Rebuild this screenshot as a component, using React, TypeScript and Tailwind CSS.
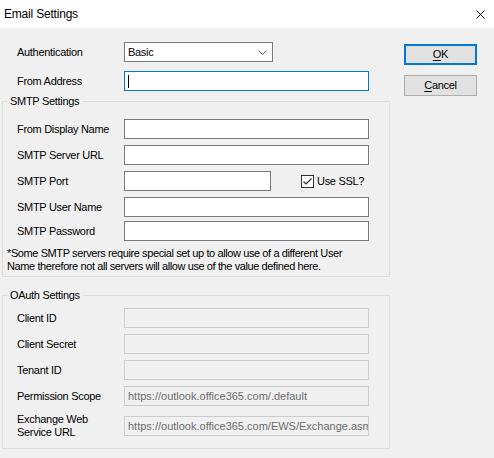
import React from "react";

const Label = ({ children, w = "w-[124px]", pl = "pl-[17px]" }: { children: React.ReactNode; w?: string; pl?: string }) => (
  <div className={`${w} ${pl} shrink-0 leading-[13px]`}>{children}</div>
);

const TextBox = ({ w = "w-[245px]", focused = false }: { w?: string; focused?: boolean }) => (
  <div className={`${w} h-[20px] bg-white border ${focused ? "border-[#0078d7]" : "border-[#7a7a7a]"} flex items-center pl-[3px]`}>
    {focused && <div className="w-px h-[13px] bg-black" />}
  </div>
);

const Disabled = ({ text = "" }: { text?: string }) => (
  <div className="w-[245px] h-[20px] bg-[#f0f0f0] border border-[#cccccc] flex items-center pl-[3px] overflow-hidden whitespace-nowrap text-[#6d6d6d] leading-[13px] tracking-normal">
    {text}
  </div>
);

export default function App() {
  return (
    <div
      className="w-[494px] h-[458px] flex flex-col bg-[#f0f0f0] text-black text-[11px] tracking-[-0.3px]"
      style={{ fontFamily: '"Liberation Sans", Arial, sans-serif' }}
    >
      {/* Title bar */}
      <div className="h-[28px] bg-white flex items-center justify-between shrink-0">
        <div className="pl-[4px] text-[12px] tracking-[-0.2px] leading-[14px]">Email Settings</div>
        <div className="pr-[9px] flex items-center">
          <svg width="9" height="9" viewBox="0 0 9 9">
            <path d="M0.5 0.5 L8.5 8.5 M8.5 0.5 L0.5 8.5" stroke="#000" strokeWidth="1" fill="none" />
          </svg>
        </div>
      </div>

      {/* Body */}
      <div className="flex flex-1">
        {/* Left column */}
        <div className="w-[404px] shrink-0 flex flex-col">
          <div className="flex items-center mt-[14px]">
            <Label>Authentication</Label>
            <div className="w-[149px] h-[20px] bg-white border border-[#7a7a7a] flex items-center justify-between pl-[3px] pr-[5px]">
              <span className="leading-[13px]">Basic</span>
              <svg width="9" height="5" viewBox="0 0 9 5">
                <path d="M0.5 0.5 L4.5 4.5 L8.5 0.5" stroke="#5a5a5a" strokeWidth="1" fill="none" />
              </svg>
            </div>
          </div>
          <div className="flex items-center mt-[9px]">
            <Label>From Address</Label>
            <TextBox focused />
          </div>

          {/* SMTP Settings */}
          <fieldset className="w-[388px] ml-[2px] mt-[4px] border border-[#dcdcdc]">
            <legend className="ml-[4px] px-[3px] leading-[13px]">SMTP Settings</legend>
            <div className="flex items-center mt-[11px]">
              <Label w="w-[121px]" pl="pl-[14px]">From Display Name</Label>
              <TextBox />
            </div>
            <div className="flex items-center mt-[6px]">
              <Label w="w-[121px]" pl="pl-[14px]">SMTP Server URL</Label>
              <TextBox />
            </div>
            <div className="flex items-center mt-[6px]">
              <Label w="w-[121px]" pl="pl-[14px]">SMTP Port</Label>
              <TextBox w="w-[147px]" />
              <div className="flex items-center ml-[30px]">
                <div className="w-[13px] h-[13px] border border-[#333333] bg-white flex items-center justify-center">
                  <svg width="11" height="11" viewBox="0 0 11 11">
                    <path d="M1.5 5.5 L4 8 L9.5 2.5" stroke="#333" strokeWidth="1.2" fill="none" />
                  </svg>
                </div>
                <span className="ml-[3px] leading-[13px]">Use SSL?</span>
              </div>
            </div>
            <div className="flex items-center mt-[6px]">
              <Label w="w-[121px]" pl="pl-[14px]">SMTP User Name</Label>
              <TextBox />
            </div>
            <div className="flex items-center mt-[4px]">
              <Label w="w-[121px]" pl="pl-[14px]">SMTP Password</Label>
              <TextBox />
            </div>
            <div className="pl-[4px] mt-[6px] pb-[3px] leading-[13px] tracking-[-0.4px]">
              *Some SMTP servers require special set up to allow use of a different User
              <br />
              Name therefore not all servers will allow use of the value defined here.
            </div>
          </fieldset>

          {/* OAuth Settings */}
          <fieldset className="w-[388px] ml-[2px] mt-[12px] border border-[#dcdcdc]">
            <legend className="ml-[4px] px-[3px] leading-[13px]">OAuth Settings</legend>
            <div className="flex items-center mt-[6px]">
              <Label w="w-[121px]" pl="pl-[14px]">Client ID</Label>
              <Disabled />
            </div>
            <div className="flex items-center mt-[6px]">
              <Label w="w-[121px]" pl="pl-[14px]">Client Secret</Label>
              <Disabled />
            </div>
            <div className="flex items-center mt-[6px]">
              <Label w="w-[121px]" pl="pl-[14px]">Tenant ID</Label>
              <Disabled />
            </div>
            <div className="flex items-center mt-[6px]">
              <Label w="w-[121px]" pl="pl-[14px]">Permission Scope</Label>
              <Disabled text="https://outlook.office365.com/.default" />
            </div>
            <div className="flex items-center mt-[7px] pb-[9px]">
              <Label w="w-[121px]" pl="pl-[14px]">
                Exchange Web
                <br />
                Service URL
              </Label>
              <Disabled text="https://outlook.office365.com/EWS/Exchange.asmx" />
            </div>
          </fieldset>
        </div>

        {/* Right column: buttons */}
        <div className="flex flex-col pt-[16px]">
          <button className="w-[73px] h-[21px] bg-[#e1e1e1] border-2 border-[#0078d7] flex items-center justify-center leading-[13px]">
            <span><span className="underline underline-offset-2">O</span>K</span>
          </button>
          <button className="w-[73px] h-[21px] mt-[10px] bg-[#e1e1e1] border border-[#adadad] flex items-center justify-center leading-[13px]">
            <span><span className="underline underline-offset-2">C</span>ancel</span>
          </button>
        </div>
      </div>
    </div>
  );
}
